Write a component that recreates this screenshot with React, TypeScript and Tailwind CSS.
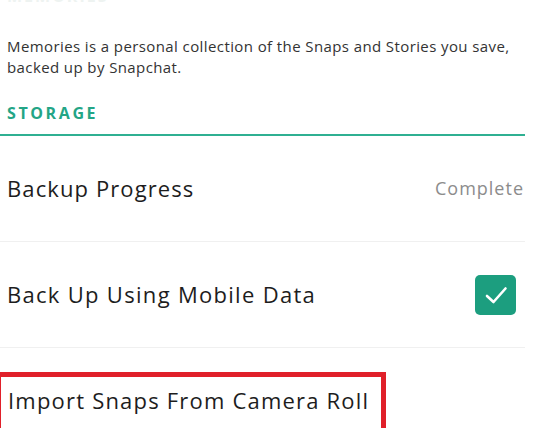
import React from "react";

export default function App() {
  return (
    <div className="w-[538px] h-[428px] overflow-hidden bg-white font-['Open_Sans',sans-serif]">
      <div className="w-[525px]">
        <div className="h-[8px] overflow-hidden pl-[7px]">
          <div className="-mt-[14px] text-[16px] font-bold tracking-[2px] text-[#eef3f1] leading-[20px]">MEMORIES</div>
        </div>
        <p className="mt-[28px] pl-[7px] pr-[2px] text-[15px] leading-[21px] tracking-[0.4px] text-[#333333]">
          Memories is a personal collection of the Snaps and Stories you save, backed up by Snapchat.
        </p>
        <div className="mt-[25px] pl-[7px] text-[16px] font-bold leading-[20px] tracking-[2.6px] text-[#23a586]">
          STORAGE
        </div>
        <div className="mt-[11px] h-[2px] bg-[#2fb092]" />
        <div className="flex h-[105px] items-center justify-between pl-[7px] pr-[1px]">
          <span className="text-[22px] tracking-[1.1px] text-[#1d1d1d]">Backup Progress</span>
          <span className="text-[18px] tracking-[1px] text-[#8c8c8c]">Complete</span>
        </div>
        <div className="h-px bg-[#f0f0f0]" />
        <div className="flex h-[105px] items-center justify-between pl-[7px] pr-[9px]">
          <span className="text-[22px] tracking-[1.3px] text-[#1d1d1d]">Back Up Using Mobile Data</span>
          <div className="flex h-[40px] w-[41px] items-center justify-center rounded-[5px] bg-[#1c9e7f]">
            <svg width="26" height="20" viewBox="0 0 26 20" fill="none">
              <path d="M4 11 L10.5 17 L22.5 3.5" stroke="white" strokeWidth="2.6" strokeLinecap="round" strokeLinejoin="round" />
            </svg>
          </div>
        </div>
        <div className="h-px bg-[#f0f0f0]" />
        <div className="pt-[24px]">
          <div className="-ml-[4px] w-[390px] h-[80px] border-[5px] border-[#e0202a] pl-[7px] pt-[8px]">
            <span className="text-[22px] leading-[30px] tracking-[1.2px] text-[#1d1d1d]">Import Snaps From Camera Roll</span>
          </div>
        </div>
      </div>
    </div>
  );
}
